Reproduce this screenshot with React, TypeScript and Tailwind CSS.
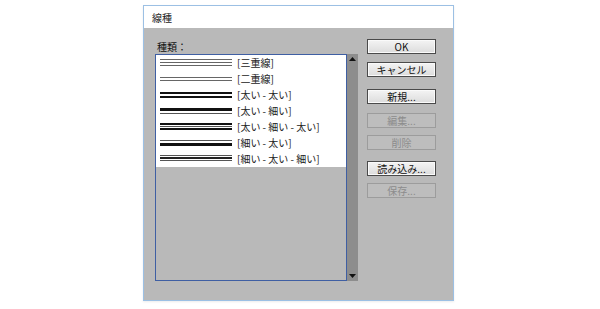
import React from "react";

// Line style samples: [y, height, colour] inside a 72x16 box
const rows: { label: string; lines: [number, number, string][] }[] = [
    { label: "[三重線]", lines: [[4, 1, "#666"], [7, 1, "#666"], [10, 1, "#666"]] },
    { label: "[二重線]", lines: [[6, 1, "#666"], [9, 1, "#666"]] },
    { label: "[太い - 太い]", lines: [[5, 2, "#111"], [9, 2, "#111"]] },
    { label: "[太い - 細い]", lines: [[5, 3, "#111"], [10, 1, "#555"]] },
    { label: "[太い - 細い - 太い]", lines: [[4, 2, "#111"], [7, 1, "#555"], [9, 2, "#111"]] },
    { label: "[細い - 太い]", lines: [[5, 1, "#555"], [8, 3, "#111"]] },
    { label: "[細い - 太い - 細い]", lines: [[4, 1, "#555"], [6, 2, "#222"], [9, 1, "#555"]] },
];

const buttons: { label: string; disabled?: boolean; gap: string }[] = [
    { label: "OK", gap: "mt-0" },
    { label: "キャンセル", gap: "mt-[8px]" },
    { label: "新規...", gap: "mt-[12px]" },
    { label: "編集...", disabled: true, gap: "mt-[9px]" },
    { label: "削除", disabled: true, gap: "mt-[7px]" },
    { label: "読み込み...", gap: "mt-[11px]" },
    { label: "保存...", disabled: true, gap: "mt-[7px]" },
];

function LineSample({ lines }: { lines: [number, number, string][] }) {
    return (
        <svg width="72" height="16" viewBox="0 0 72 16" className="shrink-0">
            {lines.map(([y, h, c], i) => (
                <rect key={i} x="0" y={y} width="72" height={h} fill={c} />
            ))}
        </svg>
    );
}

function DialogButton({ label, disabled }: { label: string; disabled?: boolean }) {
    return (
        <button
            className={`w-[69px] h-[15px] flex items-center justify-center text-[10px] leading-none border ${
                disabled
                    ? "border-[#9c9c9c] bg-[#bdbdbd] text-[#8c8c8c]"
                    : "border-[#4a4a4a] bg-gradient-to-b from-[#f4f4f4] to-[#dcdcdc] text-[#111] shadow-[inset_0_0_0_1px_#fafafa]"
            }`}
        >
            {label}
        </button>
    );
}

export default function App() {
    return (
        <div className="w-[600px] h-[309px] bg-white pt-[5px] pl-[143px] font-['Noto_Sans_CJK_JP','Noto_Sans',sans-serif]">
            <div className="w-[311px] h-[296px] border border-[#9cc0e4] flex flex-col shadow-[0_1px_2px_rgba(0,0,0,0.08)]">
                {/* Title bar */}
                <div className="h-[22px] bg-white flex items-center pl-[8px] text-[10px] text-[#222]">
                    線種
                </div>

                {/* Body */}
                <div className="flex-1 bg-[#b9b9b9] flex">
                    <div className="pl-[11px] pt-[13px]">
                        <div className="h-[13px] text-[10px] leading-[12px] text-[#111] pl-[2px]">種類：</div>
                        <div className="flex">
                            <div className="w-[192px] h-[227px] border border-[#3f5fa3] bg-[#b9b9b9]">
                                <div className="bg-white">
                                    {rows.map((r) => (
                                        <div key={r.label} className="h-[16px] flex items-center pl-[4px] gap-[5px]">
                                            <LineSample lines={r.lines} />
                                            <span className="text-[10px] leading-none text-[#222] whitespace-pre">{r.label}</span>
                                        </div>
                                    ))}
                                </div>
                            </div>
                            <div className="w-[11px] h-[227px] bg-[#8d8d8d] flex flex-col justify-between items-center py-[3px]">
                                <svg width="7" height="4" viewBox="0 0 7 4">
                                    <polygon points="3.5,0 7,4 0,4" fill="#111" />
                                </svg>
                                <svg width="7" height="4" viewBox="0 0 7 4">
                                    <polygon points="0,0 7,0 3.5,4" fill="#111" />
                                </svg>
                            </div>
                        </div>
                    </div>

                    <div className="ml-[9px] pt-[11px] flex flex-col">
                        {buttons.map((b) => (
                            <div key={b.label} className={b.gap}>
                                <DialogButton label={b.label} disabled={b.disabled} />
                            </div>
                        ))}
                    </div>
                </div>
            </div>
        </div>
    );
}
